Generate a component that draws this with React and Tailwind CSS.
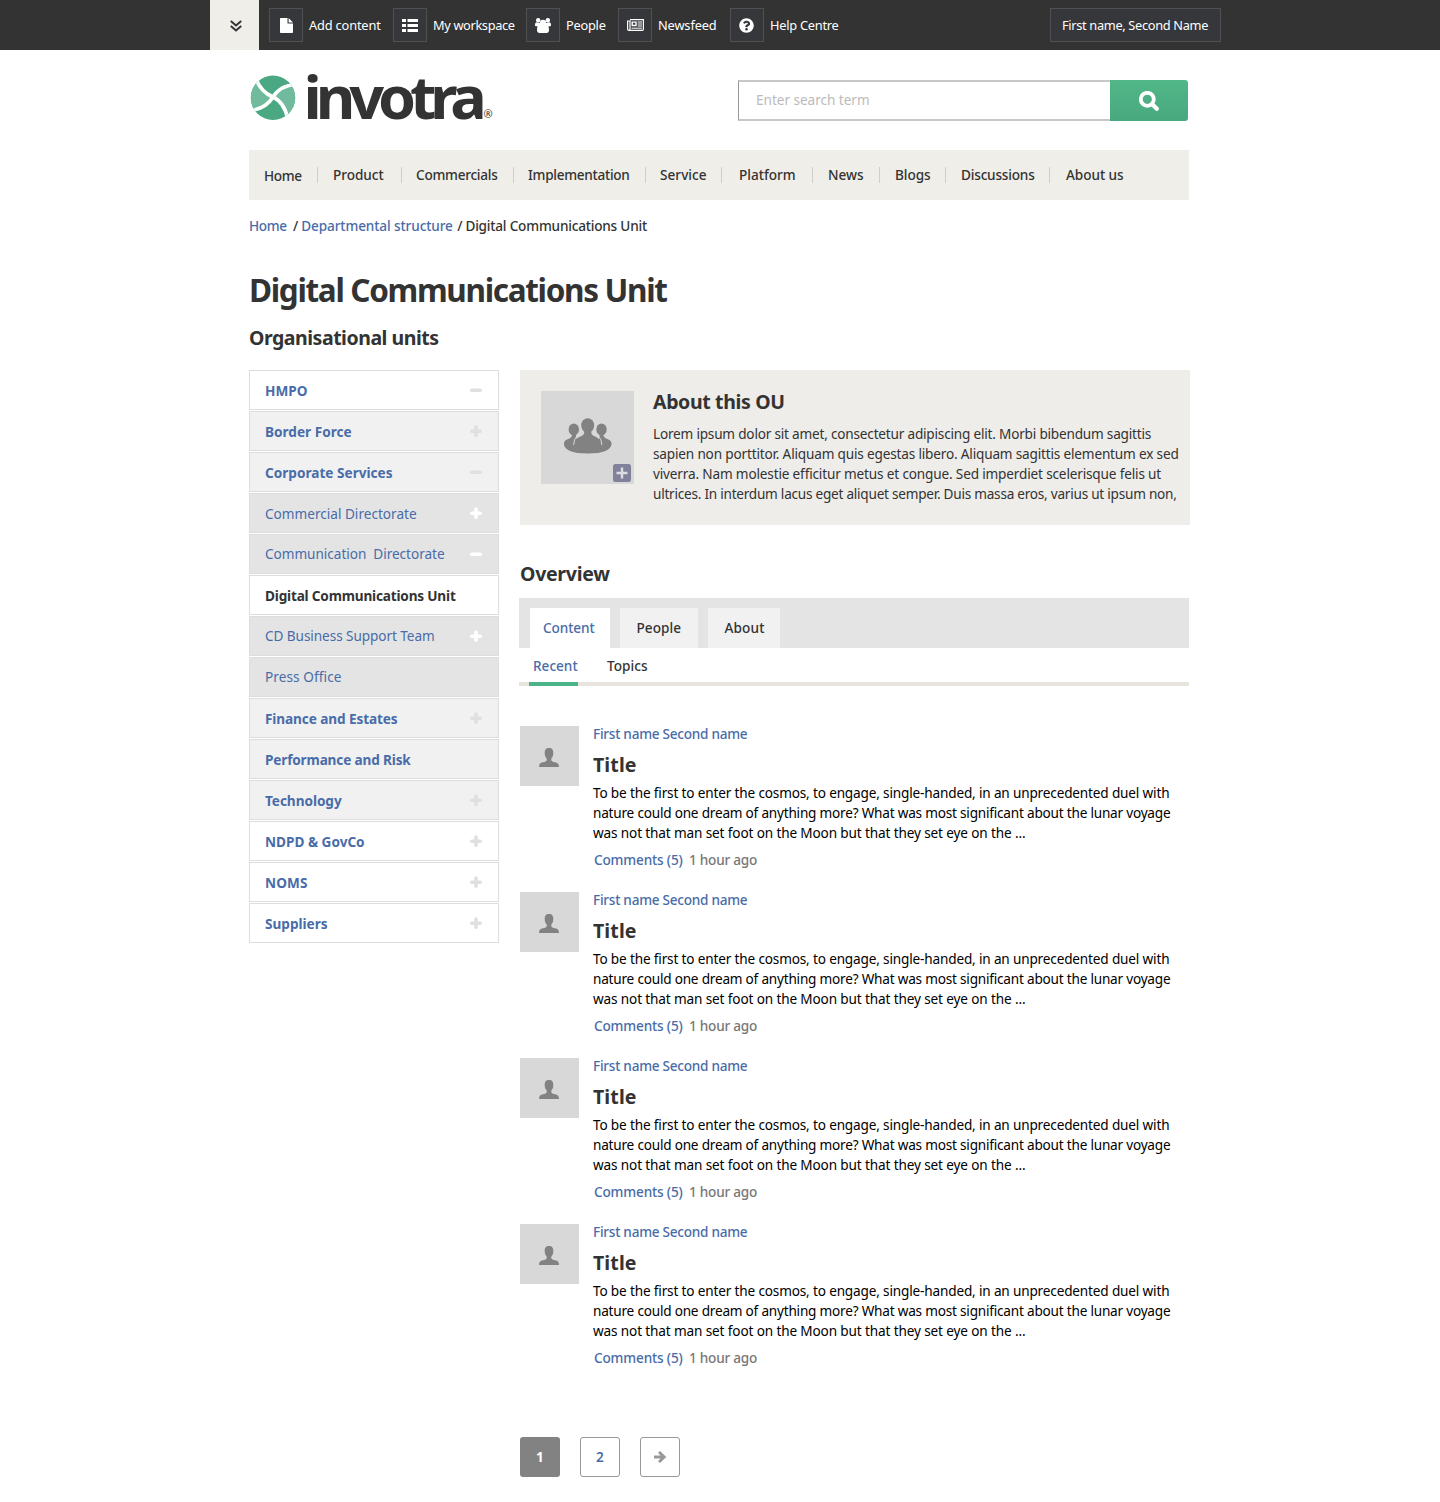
import { useLayoutEffect, useRef, useState } from "react";
import { FaQuestionCircle } from "react-icons/fa";

// Inline text whose tracking is adjusted so that the line spans w pixels.
function Fit({ w, className = "", children }) {
  const ref = useRef(null);
  const [track, setTrack] = useState(0);
  useLayoutEffect(() => {
    const natural = ref.current.getBoundingClientRect().width;
    setTrack((w - 0.4 - natural) / String(children).length);
  }, []);
  return (
    <span ref={ref} className={"inline-block shrink-0 whitespace-pre " + className} style={{ letterSpacing: track }}>
      {children}
    </span>
  );
}

function PeopleIcon() {
  return (
    <svg viewBox="0 0 16 15" className="h-[15px] w-4 fill-white">
      <circle cx="3.2" cy="2.300" r="2.200" />
      <circle cx="12.8" cy="2.300" r="2.200" />
      <circle cx="8" cy="4.8" r="3.100" />
      <path d="M0 6.700Q0 4.200 1.500 4.200L5 5H11L14.500 4.200Q16 4.200 16 6.700V7.600q0 .6-.8.6h-1.700Q14 10 14 12.300 14 15 12 15H4Q2 15 2 12.300 2 10 2.500 8.200H.8Q0 8.200 0 7.600Z" />
    </svg>
  );
}

function FileIcon() {
  return (
    <svg viewBox="0 0 13 15" className="h-[15px] w-[13px] fill-white">
      <path d="M.8 0H7.500V5.500H13V14.200Q13 15 12.200 15H.8Q0 15 0 14.200V.8Q0 0 .8 0Z" />
      <path d="M8.600 0 13 4.400H8.600Z" />
    </svg>
  );
}

function ListIcon() {
  return (
    <svg viewBox="0 0 16 13" className="h-[13px] w-4 fill-white">
      <path d="M0 0H4V3H0ZM5.500 0H16V3H5.500ZM0 5H4V8H0ZM5.500 5H16V8H5.500ZM0 10H4V13H0ZM5.500 10H16V13H5.500Z" />
    </svg>
  );
}

function NewsIcon() {
  return (
    <svg viewBox="0 0 17 12" className="-mt-px h-3 w-[17px]" fill="none" stroke="white">
      <path d="M3 .6H16.400V10.200Q16.400 11.400 15.200 11.400H1.900Q.6 11.400.6 10V2H3V10Q3 11.400 1.900 11.400" strokeWidth="1.200" />
      <path d="M5.200 3.100H9V6.500H5.200Z" strokeWidth="1.400" />
      <path d="M10.600 3H15M10.600 5H15M10.600 7H15M4.500 9.200H15" />
    </svg>
  );
}

const tools = [
  { icon: <FileIcon />, label: "Add content", w: 72, gap: "mr-3" },
  { icon: <ListIcon />, label: "My workspace", w: 82, gap: "mr-[11px]" },
  { icon: <PeopleIcon />, label: "People", w: 40, gap: "mr-3" },
  { icon: <NewsIcon />, label: "Newsfeed", w: 59, gap: "mr-[13px]" },
  { icon: <FaQuestionCircle className="size-[15px]" />, label: "Help Centre", w: 69, gap: "" },
];

function TopBar() {
  return (
    <header className="flex h-[50px] items-start bg-[#333333] pl-[210px] text-[12.8px] text-white">
      <div className="mr-[10px] flex h-[50px] w-[49px] items-center justify-center bg-[#efeee8] pt-[2px] pl-0.5">
        <svg viewBox="0 0 12 12" className="size-3" fill="none" stroke="#333" strokeWidth="2">
          <path d="m.8 1 5.200 4.400L11.200 1M.8 6 6 10.400 11.200 6" />
        </svg>
      </div>
      {tools.map((t) => (
        <div key={t.label} className={"mt-2 flex shrink-0 items-center " + t.gap}>
          <span className="mr-[6px] flex size-[34px] items-center justify-center border border-[#505050] bg-[#36373b]">{t.icon}</span>
          <span className="flex"><Fit w={t.w}>{t.label}</Fit><span className="w-[0.4px]" /></span>
        </div>
      ))}
      <div className="mt-2 ml-[211px] flex h-[34px] w-[171px] items-center border border-[#505050] bg-[#36373b] pl-[11px]">
        <Fit w={146.500}>First name, Second Name</Fit>
      </div>
    </header>
  );
}

function Logo() {
  return (
    <svg viewBox="0 0 246 52" className="h-[52px] w-[246px] overflow-visible" role="img" aria-label="invotra">
      <clipPath id="disc"><circle cx="24" cy="27.700" r="22.200" /></clipPath>
      <g clipPath="url(#disc)">
        <rect x="0" y="4" width="48" height="48" fill="#4aa883" />
        <path d="M7.500 11Q13 22 24 27Q15 38 3 40L-6 26ZM45 14Q33 17 24 27Q35 33 39 47L56 30Z" fill="#70ba9d" />
        <path d="M7 9Q12 22 24 27Q35 32 39 49" fill="none" stroke="white" strokeWidth="3.600" />
        <path d="M47 14.500Q31 15.500 24 27Q17 38.500 2 40.500" fill="none" stroke="white" strokeWidth="3.600" />
      </g>
      <text x="0" y="0" transform="translate(54.500 48.800) scale(1 .97)" className="fill-[#333] font-['Noto_Sans',sans-serif] text-[61px] font-bold tracking-[-6.100px]">invotra</text>
      <text x="234.500" y="48" className="fill-[#333] font-['Noto_Sans',sans-serif] text-[11px]">®</text>
    </svg>
  );
}

const nav = [
  ["Home", 38, "w-[68px] pt-px pl-[15px]"],
  ["Product", 51, "w-[84px] pl-4"],
  ["Commercials", 82, "w-[112px] pl-[15px]"],
  ["Implementation", 102, "w-[132px] pl-[15px]"],
  ["Service", 47, "w-[76px] pl-[15px]"],
  ["Platform", 57, "w-[91px] pl-[18px]"],
  ["News", 36, "w-[67px] pl-4"],
  ["Blogs", 36, "w-[66px] pl-4"],
  ["Discussions", 74, "w-[104px] pl-4"],
  ["About us", 58, "w-[140px] pl-[17px]"],
];

const units = [
  ["HMPO", 43, "top", "-"],
  ["Border Force", 87, "mid", "+"],
  ["Corporate Services", 128, "mid", "-"],
  ["Commercial Directorate", 152, "sub", "+"],
  ["Communication  Directorate", 180, "subHigh", "-"],
  ["Digital Communications Unit", 191, "current", ""],
  ["CD Business Support Team", 170, "subHigh", "+"],
  ["Press Office", 77, "subHigh", ""],
  ["Finance and Estates", 133, "mid", "+"],
  ["Performance and Risk", 146, "mid", ""],
  ["Technology", 77, "mid", "+"],
  ["NDPD & GovCo", 100, "top", "+"],
  ["NOMS", 43, "top", "+"],
  ["Suppliers", 63, "top", "+"],
];

const rowStyle = {
  top: "bg-white font-bold text-[#496ca8]",
  mid: "bg-[#f1f1f1] font-bold text-[#496ca8]",
  sub: "bg-[#e4e4e4] text-[#496ca8]",
  subHigh: "bg-[#e4e4e4] text-[#496ca8]",
  current: "bg-white font-bold text-[#333333]",
};

function PlusMinus({ sign, white }) {
  return (
    <svg viewBox="0 0 12 12" className={white ? "size-3 text-white" : "size-3 text-[#e0e0e0]"} fill="none" stroke="currentColor" strokeWidth="3.600" strokeLinecap="round">
      <path d="M1.800 6.300H10.200" />
      {sign === "+" && <path d="M6 2.100V10.200" />}
    </svg>
  );
}

function Sidebar() {
  return (
    <nav className="flex w-[250px] shrink-0 flex-col gap-px">
      {units.map(([name, w, kind, sign]) => (
        <div key={name} className={"flex h-10 items-center justify-between border border-[#dddddd] pr-4 pl-[15px] " + rowStyle[kind]}>
          <Fit w={w} className={kind === "subHigh" ? "" : "pt-0.5"}>{name}</Fit>
          {sign && <PlusMinus sign={sign} white={kind.startsWith("sub")} />}
        </div>
      ))}
    </nav>
  );
}

const aboutLines = [
  ["Lorem ipsum dolor sit amet, consectetur adipiscing elit. Morbi bibendum sagittis", 498.500],
  ["sapien non porttitor. Aliquam quis egestas libero. Aliquam sagittis elementum ex sed", 526],
  ["viverra. Nam molestie efficitur metus et congue. Sed imperdiet scelerisque felis ut", 508.500],
  ["ultrices. In interdum lacus eget aliquet semper. Duis massa eros, varius ut ipsum non,", 524],
];

function About() {
  return (
    <section className="flex h-[155px] w-[670px] bg-[#eeede9] pt-[21px] pl-[21px]">
      <div className="relative mr-[19px] size-[93px] shrink-0 bg-[#d8d8d8]">
        <svg viewBox="0 0 48 36" className="mt-[27px] ml-[23px] h-9 w-12 fill-[#828282]">
          <ellipse cx="9.800" cy="11.500" rx="5.200" ry="6" />
          <ellipse cx="37.500" cy="11.500" rx="5.200" ry="6" />
          <path d="M8 15H12Q11.500 19 13 22L9.500 29C3 30 0 29 0 25.500Q0 22 5.500 20.500Q8.500 19 8 15ZM39.300 15H35.500Q36 19 34.500 22L38 29C44.500 30 47.500 29 47.500 25.500Q47.500 22 42 20.500Q39 19 39.300 15Z" />
          <path d="M0 25.500Q0 35.500 23.700 35.500T47.400 25.500Q46 22.500 42 21L38 27Q36 20 30 18Q27 17 27.200 13H20.200Q20.500 17 17.500 18Q11 20 9.500 27L5 21Q0 23 0 25.500Z" />
          <path d="M12.600 18.500Q10 21 9.600 27M34.800 18.500Q37.500 21 37.900 27" fill="none" stroke="#d8d8d8" strokeWidth="1" />
          <ellipse cx="23.700" cy="7.500" rx="6.500" ry="7.300" />
        </svg>
        <svg viewBox="0 0 18 18" className="absolute right-[3px] bottom-[2px] size-[18px]">
          <rect width="18" height="18" rx="2.500" fill="#81819c" />
          <path d="M9 3.500V14.500M3.500 9H14.500" stroke="#dcdce2" strokeWidth="2.400" />
        </svg>
      </div>
      <div>
        <h2 className="mt-[-2px] flex h-[26px] items-center text-[19.500px] font-bold text-[#333]"><Fit w={132}>About this OU</Fit></h2>
        <div className="mt-[9px] flex flex-col items-start text-[13.600px] leading-5 text-[#333]">
          {aboutLines.map(([t, w]) => <Fit key={t} w={w}>{t}</Fit>)}
        </div>
      </div>
    </section>
  );
}

function Tabs() {
  return (
    <div className="ml-[-1px] w-[670px] font-medium text-[#333]">
      <div className="flex h-[50px] items-end gap-[10px] bg-[#e4e4e4] pl-[11px]">
        <div className="flex h-10 w-20 items-center bg-white pl-[13px] text-[#496ca8]"><Fit w={52}>Content</Fit></div>
        <div className="flex h-10 w-[78px] items-center bg-[#f1f1f1] pl-[16.500px]"><Fit w={45}>People</Fit></div>
        <div className="flex h-10 w-[72px] items-center bg-[#f1f1f1] pl-[16.500px]"><Fit w={40.500}>About</Fit></div>
      </div>
      <div className="flex h-[38px] border-b-4 border-[#e8e5df] pl-[10px]">
        <div className="mr-[29px] h-[38px] w-[49px] border-b-4 border-[#4ab488] pt-2 pl-1 leading-5 text-[#496ca8]"><Fit w={45}>Recent</Fit></div>
        <div className="pt-2 leading-5"><Fit w={41}>Topics</Fit></div>
      </div>
    </div>
  );
}

function Post() {
  return (
    <article className="flex h-[166px]">
      <div className="mr-[14px] flex h-[60px] w-[59px] shrink-0 bg-[#d8d8d8] pt-[22px] pl-[19px]">
        <svg viewBox="0 0 20 19" className="h-[19px] w-5 fill-[#828282]">
          <path d="M10 0C13.300 0 14.300 2 14.300 5C14.300 8 13.300 9.300 12.300 10.500V12.500Q13 13.800 17 14.600Q20 15.300 20 19H0Q0 15.300 3 14.600Q7 13.800 7.700 12.500V10.500C6.700 9.300 5.700 8 5.700 5C5.700 2 6.700 0 10 0Z" />
        </svg>
      </div>
      <div className="text-[13.600px] leading-5">
        <div className="mt-[-2px] h-5 font-medium text-[#496ca8]"><Fit w={154.800}>First name Second name</Fit></div>
        <h3 className="mt-[7px] flex h-7 items-center text-[19.500px] font-bold text-[#333]"><Fit w={44}>Title</Fit></h3>
        <div className="mt-1 flex flex-col items-start text-black">
          <Fit w={576.800}>To be the first to enter the cosmos, to engage, single-handed, in an unprecedented duel with</Fit>
          <Fit w={577.800}>nature could one dream of anything more? What was most significant about the lunar voyage</Fit>
          <Fit w={432.800}>was not that man set foot on the Moon but that they set eye on the ...</Fit>
        </div>
        <div className="mt-[7px] ml-px flex gap-[6.400px] font-medium">
          <Fit w={89} className="text-[#496ca8]">Comments (5)</Fit>
          <Fit w={68.500} className="text-[#777]">1 hour ago</Fit>
        </div>
      </div>
    </article>
  );
}

export default function App() {
  return (
    <div className="h-[1502px] w-[1440px] overflow-hidden bg-white font-['Noto_Sans',sans-serif] text-[13.600px] leading-5 text-[#333]">
      <TopBar />
      <div className="ml-[249px] w-[941px]">
        <div className="flex h-[100px] justify-between">
          <div className="mt-5"><Logo /></div>
          <div className="mt-[30px] mr-[2px] flex h-[41px] w-[450px]">
            <div className="flex w-[372px] items-center border-y-2 border-l border-y-[#c8c8c8] border-l-[#999] pb-0.5 pl-[17px] text-[#bbb]"><Fit w={114}>Enter search term</Fit></div>
            <div className="flex w-[78px] items-center justify-center rounded-r-[3px] bg-linear-to-b from-[#52b788] to-[#48a87f]">
              <svg viewBox="0 0 20 20" className="size-5" fill="none" stroke="white">
                <circle cx="8.300" cy="8.300" r="6.500" strokeWidth="3.800" />
                <path d="m13.500 13.500 4.300 4.300" strokeWidth="4.200" strokeLinecap="round" />
              </svg>
            </div>
          </div>
        </div>
        <nav className="flex h-[50px] w-[940px] items-center bg-[#efeee8] font-medium">
          {nav.map(([t, w, cls], i) => (
            <div key={t} className="flex items-center">
              <div className={"shrink-0 " + cls}><Fit w={w}>{t}</Fit></div>
              {i < nav.length - 1 && <div className="-mr-px h-4 w-px bg-[#cfcec9]" />}
            </div>
          ))}
        </nav>
        <div className="mt-4 flex h-5 font-medium">
          <Fit w={38} className="mr-[6.400px] text-[#496ca8]">Home</Fit>
          <Fit w={5} className="mr-[3.600px]">/</Fit>
          <Fit w={152} className="mr-[4.400px] text-[#496ca8]">Departmental structure</Fit>
          <Fit w={5} className="mr-[3.600px]">/</Fit>
          <Fit w={182}>Digital Communications Unit</Fit>
        </div>
        <h1 className="mt-[34px] flex h-10 items-center text-[31.500px] font-bold"><Fit w={418}>Digital Communications Unit</Fit></h1>
        <h2 className="mt-[14px] flex h-7 items-center text-[19.500px] font-bold"><Fit w={190}>Organisational units</Fit></h2>
        <div className="mt-[18px] flex gap-[21px]">
          <Sidebar />
          <main className="w-[670px]">
            <About />
            <h2 className="mt-[35px] mb-[10px] flex h-7 items-center text-[19.500px] font-bold"><Fit w={90}>Overview</Fit></h2>
            <Tabs />
            <div className="mt-10">
              <Post />
              <Post />
              <Post />
              <Post />
            </div>
            <div className="mt-[47px] flex gap-5 font-bold">
              <div className="flex size-10 items-center justify-center rounded-[3px] bg-[#828282] text-white">1</div>
              <div className="flex size-10 items-center justify-center rounded-[3px] border border-[#999] font-semibold text-[#496ca8]">2</div>
              <div className="flex size-10 items-center justify-center rounded-[3px] border border-[#999] text-[#999]">
                <svg viewBox="0 0 12 12" className="size-3" fill="none" stroke="currentColor" strokeWidth="2.800">
                  <path d="M0 6H10M5 .9 10.200 6 5 11.100" />
                </svg>
              </div>
            </div>
          </main>
        </div>
      </div>
    </div>
  );
}
